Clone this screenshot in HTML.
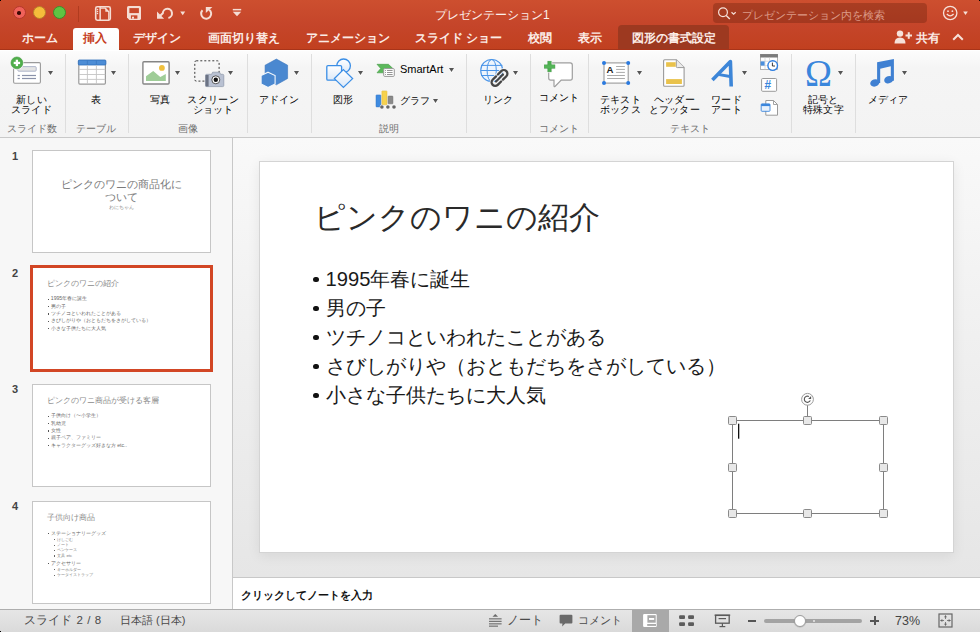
<!DOCTYPE html>
<html><head><meta charset="utf-8">
<style>
*{box-sizing:border-box;margin:0;padding:0}
html,body{width:980px;height:632px;overflow:hidden;background:#f0f0f0;font-family:"Liberation Sans",sans-serif;color:#222}
.a{position:absolute}
#top{left:0;top:0;width:980px;height:50px;background:linear-gradient(#cd4f2f,#c5452a 50%,#c1401f);}
#top .ln{left:0;top:49px;width:980px;height:1px;background:#a8341a}
.tl{width:13px;height:13px;border-radius:50%;top:6.3px}
.tt{font-size:11.7px;color:#fbece6;top:31px;font-weight:700;white-space:nowrap;line-height:14px}
#ribbon{left:0;top:50px;width:980px;height:88px;background:linear-gradient(#fcfcfc,#f5f5f5 20%,#f3f3f3);border-top:1px solid #fff}
#ribbon .bl{left:0;top:86px;width:980px;height:1px;background:#c9c9c9}
.sep{width:1px;background:#dedede;top:4px;height:79px}
.lbl{font-size:10px;line-height:9.1px;color:#000;font-weight:500;white-space:nowrap;text-align:center}
.glbl{font-size:9.5px;line-height:10px;color:#6e6e6e;white-space:nowrap;top:74px}
.dd{width:0;height:0;border-left:2.5px solid transparent;border-right:2.5px solid transparent;border-top:4px solid #555}
#left{left:0;top:138px;width:233px;height:471px;background:#f7f7f7;border-right:1px solid #c8c8c8}
.num{font-size:11px;color:#444;font-weight:bold;left:12px}
.th{left:32px;width:179px;height:103px;background:#fff;border:1px solid #c6c6c6;overflow:hidden}
#main{left:233px;top:138px;width:747px;height:439px;background:linear-gradient(#f9f9f9,#f0f0f0 45%,#e6e6e6)}
#slide{left:259px;top:161px;width:695px;height:392px;background:#fff;border:1px solid #d4d4d4;box-shadow:0 3px 12px rgba(0,0,0,.07)}
#notes{left:233px;top:577px;width:747px;height:32px;background:#fff;border-top:1px solid #c8c8c8}
#status{left:0;top:609px;width:980px;height:23px;background:linear-gradient(#e6e6e6,#dadada);border-top:1px solid #aeaeae}
.st{font-size:11.5px;color:#4a4a4a;white-space:nowrap;top:614px;line-height:13px}
.bul{left:53px;width:5.7px;height:5.7px;border-radius:50%;background:#111}
.tc{white-space:nowrap}
.tb{left:14.7px;width:1.4px;height:1.4px;background:#555}
.tb2{left:21px;width:1.2px;height:1.2px;background:#666}
.l2{font-size:9.5px;letter-spacing:0.3px;line-height:9.8px;transform:translate(0.15px,-0.5px)}
</style></head><body>
<!-- TOP BAR -->
<div id="top" class="a">
  <div class="a ln"></div>
  <div class="a tl" style="left:12.5px;background:#f0625a;border:1px solid #b5372c"><div class="a" style="left:3.9px;top:3.9px;width:3.6px;height:3.6px;border-radius:50%;background:#3a0905"></div></div>
  <div class="a tl" style="left:32.5px;background:#f5bd3b;border:1px solid #b9802a"></div>
  <div class="a tl" style="left:52.5px;background:#5fc443;border:1px solid #3b8f2c"></div>
  <div class="a" style="left:78px;top:6px;width:1px;height:16px;background:#b03b1f"></div>
  <!-- sidebar icon -->
  <svg class="a" style="left:94px;top:5px" width="18" height="17" viewBox="0 0 18 17"><rect x="1.7" y="1.8" width="14.6" height="13.4" rx="1.6" fill="none" stroke="#f5ddd4" stroke-width="1.6"/><rect x="5.4" y="1.8" width="1.5" height="13.4" fill="#f5ddd4"/><circle cx="3.5" cy="4.4" r="0.75" fill="#f5ddd4"/><circle cx="3.5" cy="6.4" r="0.75" fill="#f5ddd4"/><circle cx="3.5" cy="8.4" r="0.75" fill="#f5ddd4"/><path d="M7 3.2 L11.3 3.2 L14.8 6.7 L14.8 15" fill="none" stroke="#f5ddd4" stroke-width="1.3"/><path d="M11.3 3.2 L11.3 6.7 L14.8 6.7 Z" fill="#f5ddd4"/></svg>
  <!-- save icon -->
  <svg class="a" style="left:126px;top:5px" width="16" height="17" viewBox="0 0 16 17"><path d="M1 2.6 Q1 1 2.6 1 L13.4 1 Q15 1 15 2.6 L15 13.4 Q15 15 13.4 15 L3.4 15 L1 12.6 Z" fill="#f5ddd4"/><rect x="3.4" y="3.1" width="9.5" height="5" fill="#c9482a"/><rect x="4.9" y="10.3" width="6.5" height="3.4" fill="#c9482a"/><rect x="6" y="11.7" width="2" height="2" fill="#f5ddd4"/></svg>
  <!-- undo / repeat -->
  <svg class="a" style="left:150px;top:0" width="70" height="28" viewBox="150 0 70 28">
   <path d="M160.2 15.8 L162.8 13.2 A4.6 4.6 0 1 1 168.4 17.9" fill="none" stroke="#f5ddd4" stroke-width="2"/>
   <path d="M157 11.6 L157 18.7 L164.1 18.7 Z" fill="#f5ddd4"/>
   <path d="M180.2 11.4 L185.2 11.4 L182.7 15.2 Z" fill="#f5ddd4"/>
   <path d="M202.5 10.3 A5 5 0 1 0 209.2 9.7" fill="none" stroke="#f5ddd4" stroke-width="2"/>
   <path d="M205.8 6.9 L212.4 6.9 L205.8 13 Z" fill="#f5ddd4"/>
  </svg>
  <!-- customize -->
  <svg class="a" style="left:232px;top:8px" width="10" height="10" viewBox="0 0 10 10"><rect x="0.8" y="0.9" width="8.4" height="1.5" fill="#f5ddd4"/><path d="M0.8 3.8 L9.2 3.8 L5 8.2 Z" fill="#f5ddd4"/></svg>
  <div class="a" style="left:435px;top:8px;font-size:12px;color:#fbefea;line-height:14px;white-space:nowrap;font-weight:500">プレゼンテーション1</div>
  <!-- search -->
  <div class="a" style="left:713px;top:3px;width:214px;height:20px;border-radius:4px;background:rgba(80,20,5,.28)"></div>
  <svg class="a" style="left:716px;top:6px" width="22" height="14" viewBox="0 0 22 14"><circle cx="7" cy="6.2" r="4.4" fill="none" stroke="#f6e1d9" stroke-width="1.2"/><line x1="10.2" y1="9.4" x2="13.8" y2="13" stroke="#f6e1d9" stroke-width="1.4"/><path d="M15.5 6.3 L17.6 8.2 L19.7 6.3" fill="none" stroke="#f6e1d9" stroke-width="1.2"/></svg>
  <div class="a" style="left:742px;top:8px;font-size:10.9px;color:#dc9a88;line-height:14px;white-space:nowrap">プレゼンテーション内を検索</div>
  <!-- smiley -->
  <svg class="a" style="left:942px;top:5px" width="28" height="17" viewBox="0 0 28 17"><circle cx="8.2" cy="8" r="6.7" fill="none" stroke="#f6e1d9" stroke-width="1.3"/><circle cx="6" cy="6.2" r="0.9" fill="#f6e1d9"/><circle cx="10.4" cy="6.2" r="0.9" fill="#f6e1d9"/><path d="M4.8 9 Q8.2 12.8 11.6 9" fill="none" stroke="#f6e1d9" stroke-width="1.2"/><path d="M21.2 6.5 L25.8 6.5 L23.5 10 Z" fill="#f6e1d9"/></svg>
  <!-- tabs -->
  <div class="a tt" style="left:22px">ホーム</div>
  <div class="a" style="left:73px;top:28px;width:46px;height:23px;background:linear-gradient(#ffffff,#fbfbfb);border-radius:3px 3px 0 0"></div>
  <div class="a tt" style="left:83px;color:#c63f1e">挿入</div>
  <div class="a tt" style="left:133px">デザイン</div>
  <div class="a tt" style="left:208px">画面切り替え</div>
  <div class="a tt" style="left:306px">アニメーション</div>
  <div class="a tt" style="left:415px">スライド ショー</div>
  <div class="a tt" style="left:528px">校閲</div>
  <div class="a tt" style="left:578px">表示</div>
  <div class="a" style="left:618px;top:25px;width:111px;height:24px;background:#9d3920;border-radius:4px 4px 0 0"></div>
  <div class="a tt" style="left:632px">図形の書式設定</div>
  <svg class="a" style="left:894px;top:30px" width="19" height="14" viewBox="0 0 19 14"><circle cx="6" cy="3.6" r="3.2" fill="#f6e1d9"/><path d="M0.5 13.5 Q0.5 7.5 6 7.5 Q11.5 7.5 11.5 13.5 Z" fill="#f6e1d9"/><rect x="11.5" y="4.5" width="6.5" height="2" fill="#f6e1d9"/><rect x="13.75" y="2.2" width="2" height="6.6" fill="#f6e1d9"/></svg>
  <div class="a tt" style="left:916px">共有</div>
  <svg class="a" style="left:952px;top:33px" width="12" height="8" viewBox="0 0 12 8"><path d="M1.2 6.8 L6 2 L10.8 6.8" fill="none" stroke="#f6e1d9" stroke-width="2"/></svg>
</div>
<!-- RIBBON -->
<div id="ribbon" class="a">
  <div class="a bl"></div>
</div>
<div class="a sep" style="left:65px;top:54px;height:79px"></div>
<div class="a sep" style="left:128px;top:54px;height:79px"></div>
<div class="a sep" style="left:247px;top:54px;height:79px"></div>
<div class="a sep" style="left:311px;top:54px;height:79px"></div>
<div class="a sep" style="left:466px;top:54px;height:79px"></div>
<div class="a sep" style="left:530px;top:54px;height:79px"></div>
<div class="a sep" style="left:588px;top:54px;height:79px"></div>
<div class="a sep" style="left:791px;top:54px;height:79px"></div>
<div class="a sep" style="left:855px;top:54px;height:79px"></div>
<div class="a lbl l2" style="left:-13.7px;top:95px;width:90px">新しい<br>スライド</div>
<div class="a lbl" style="left:50.7px;top:95px;width:90px">表</div>
<div class="a lbl" style="left:114.6px;top:95px;width:90px">写真</div>
<div class="a lbl l2" style="left:168px;top:95px;width:90px">スクリーン<br>ショット</div>
<div class="a lbl" style="left:234.3px;top:95px;width:90px">アドイン</div>
<div class="a lbl" style="left:297.6px;top:95px;width:90px">図形</div>
<div class="a lbl" style="left:452.6px;top:95px;width:90px">リンク</div>
<div class="a lbl" style="left:514.3px;top:93px;width:90px">コメント</div>
<div class="a lbl l2" style="left:575.1px;top:95px;width:90px">テキスト<br>ボックス</div>
<div class="a lbl l2" style="left:629.2px;top:95px;width:90px">ヘッダー<br>とフッター</div>
<div class="a lbl l2" style="left:681.3px;top:95px;width:90px">ワード<br>アート</div>
<div class="a lbl l2" style="left:778.1px;top:95px;width:90px">記号と<br>特殊文字</div>
<div class="a lbl" style="left:842.5px;top:95px;width:90px">メディア</div>
<div class="a lbl" style="left:400px;top:65px;font-size:11px;text-align:left">SmartArt</div>
<div class="a lbl" style="left:400px;top:96px;text-align:left">グラフ</div>
<div class="a glbl" style="left:-12.75px;top:123.5px;width:90px;text-align:center">スライド数</div>
<div class="a glbl" style="left:51.400000000000006px;top:123.5px;width:90px;text-align:center">テーブル</div>
<div class="a glbl" style="left:142.9px;top:123.5px;width:90px;text-align:center">画像</div>
<div class="a glbl" style="left:344.2px;top:123.5px;width:90px;text-align:center">説明</div>
<div class="a glbl" style="left:514.25px;top:123.5px;width:90px;text-align:center">コメント</div>
<div class="a glbl" style="left:644.5px;top:123.5px;width:90px;text-align:center">テキスト</div>
<svg class="a" style="left:47px;top:70px" width="7" height="7" viewBox="0 0 7 7"><path d="M1 1.5 L6 1.5 L3.5 5.5 Z" fill="#fff" transform="translate(0,0.8)"/><path d="M1 1 L6 1 L3.5 5 Z" fill="#555"/></svg>
<svg class="a" style="left:110px;top:70px" width="7" height="7" viewBox="0 0 7 7"><path d="M1 1.5 L6 1.5 L3.5 5.5 Z" fill="#fff" transform="translate(0,0.8)"/><path d="M1 1 L6 1 L3.5 5 Z" fill="#555"/></svg>
<svg class="a" style="left:174px;top:70px" width="7" height="7" viewBox="0 0 7 7"><path d="M1 1.5 L6 1.5 L3.5 5.5 Z" fill="#fff" transform="translate(0,0.8)"/><path d="M1 1 L6 1 L3.5 5 Z" fill="#555"/></svg>
<svg class="a" style="left:227px;top:70px" width="7" height="7" viewBox="0 0 7 7"><path d="M1 1.5 L6 1.5 L3.5 5.5 Z" fill="#fff" transform="translate(0,0.8)"/><path d="M1 1 L6 1 L3.5 5 Z" fill="#555"/></svg>
<svg class="a" style="left:293px;top:70px" width="7" height="7" viewBox="0 0 7 7"><path d="M1 1.5 L6 1.5 L3.5 5.5 Z" fill="#fff" transform="translate(0,0.8)"/><path d="M1 1 L6 1 L3.5 5 Z" fill="#555"/></svg>
<svg class="a" style="left:357px;top:70px" width="7" height="7" viewBox="0 0 7 7"><path d="M1 1.5 L6 1.5 L3.5 5.5 Z" fill="#fff" transform="translate(0,0.8)"/><path d="M1 1 L6 1 L3.5 5 Z" fill="#555"/></svg>
<svg class="a" style="left:448px;top:67px" width="7" height="7" viewBox="0 0 7 7"><path d="M1 1.5 L6 1.5 L3.5 5.5 Z" fill="#fff" transform="translate(0,0.8)"/><path d="M1 1 L6 1 L3.5 5 Z" fill="#555"/></svg>
<svg class="a" style="left:432px;top:97.5px" width="7" height="7" viewBox="0 0 7 7"><path d="M1 1.5 L6 1.5 L3.5 5.5 Z" fill="#fff" transform="translate(0,0.8)"/><path d="M1 1 L6 1 L3.5 5 Z" fill="#555"/></svg>
<svg class="a" style="left:512px;top:70px" width="7" height="7" viewBox="0 0 7 7"><path d="M1 1.5 L6 1.5 L3.5 5.5 Z" fill="#fff" transform="translate(0,0.8)"/><path d="M1 1 L6 1 L3.5 5 Z" fill="#555"/></svg>
<svg class="a" style="left:636px;top:70px" width="7" height="7" viewBox="0 0 7 7"><path d="M1 1.5 L6 1.5 L3.5 5.5 Z" fill="#fff" transform="translate(0,0.8)"/><path d="M1 1 L6 1 L3.5 5 Z" fill="#555"/></svg>
<svg class="a" style="left:741px;top:70px" width="7" height="7" viewBox="0 0 7 7"><path d="M1 1.5 L6 1.5 L3.5 5.5 Z" fill="#fff" transform="translate(0,0.8)"/><path d="M1 1 L6 1 L3.5 5 Z" fill="#555"/></svg>
<svg class="a" style="left:837px;top:70px" width="7" height="7" viewBox="0 0 7 7"><path d="M1 1.5 L6 1.5 L3.5 5.5 Z" fill="#fff" transform="translate(0,0.8)"/><path d="M1 1 L6 1 L3.5 5 Z" fill="#555"/></svg>
<svg class="a" style="left:901px;top:70px" width="7" height="7" viewBox="0 0 7 7"><path d="M1 1.5 L6 1.5 L3.5 5.5 Z" fill="#fff" transform="translate(0,0.8)"/><path d="M1 1 L6 1 L3.5 5 Z" fill="#555"/></svg>
<!-- ICONS -->
<svg class="a" style="left:0;top:50px" width="980" height="88" viewBox="0 50 980 88">
 <!-- new slide -->
 <rect x="13.6" y="62.6" width="26.8" height="20.6" rx="1.2" fill="#fff" stroke="#9a9a9a" stroke-width="1.1"/>
 <rect x="17.8" y="66.6" width="18.4" height="4.6" rx="1" fill="#e4e4e4" stroke="#a8b0c6" stroke-width="0.9"/>
 <rect x="17.6" y="74.9" width="2.2" height="1.2" fill="#8a92aa"/><rect x="22" y="74.9" width="14" height="1.2" fill="#8a92aa"/>
 <rect x="17.6" y="77.9" width="2.2" height="1.2" fill="#8a92aa"/><rect x="22" y="77.9" width="14" height="1.2" fill="#8a92aa"/>
 <circle cx="16.9" cy="62.9" r="6.8" fill="#f4f4f4"/>
 <circle cx="16.9" cy="62.9" r="5.9" fill="#4fae4a" stroke="#3e9a3a" stroke-width="0.6"/>
 <rect x="13.7" y="61.8" width="6.4" height="2.3" fill="#fff"/><rect x="15.75" y="59.7" width="2.3" height="6.4" fill="#fff"/>
 <!-- table -->
 <rect x="78.8" y="60.5" width="26.6" height="23.6" rx="1" fill="#fff" stroke="#9a9a9a" stroke-width="1.2"/>
 <rect x="78.3" y="60" width="27.6" height="5" rx="1" fill="#4c8dd6" stroke="#2f6fba" stroke-width="0.8"/>
 <g stroke="#c4c4c4" stroke-width="0.9"><line x1="87.4" y1="65" x2="87.4" y2="84"/><line x1="96.4" y1="65" x2="96.4" y2="84"/><line x1="79" y1="69.4" x2="105.3" y2="69.4"/><line x1="79" y1="74.5" x2="105.3" y2="74.5"/><line x1="79" y1="79.4" x2="105.3" y2="79.4"/></g>
 <g stroke="#3a78c2" stroke-width="0.8"><line x1="87.4" y1="60.5" x2="87.4" y2="64.6"/><line x1="96.4" y1="60.5" x2="96.4" y2="64.6"/></g>
 <!-- picture -->
 <rect x="142.9" y="61.7" width="26.2" height="22.3" rx="1" fill="#fff" stroke="#858585" stroke-width="1.4"/>
 <circle cx="161.9" cy="67.9" r="2.9" fill="#f0c03e"/>
 <path d="M146 76.3 L153.2 70.9 L160.3 77 L165.8 74 L165.8 80.9 L146 80.9 Z" fill="#9fcd98"/>
 <!-- screenshot -->
 <rect x="194.8" y="60.8" width="24.3" height="20.3" rx="1.5" fill="none" stroke="#3a3a3a" stroke-width="1" stroke-dasharray="2 2"/>
 <path d="M205.5 75.5 Q205.5 74.3 206.7 74.3 L211.6 74.3 L212.6 72.2 L219.6 72.2 L220.6 74.3 L222.6 74.3 Q223.8 74.3 223.8 75.5 L223.8 85.4 Q223.8 86.6 222.6 86.6 L206.7 86.6 Q205.5 86.6 205.5 85.4 Z" fill="#b9c1d2" stroke="#8d96a8" stroke-width="0.7"/>
 <rect x="205.6" y="75" width="3" height="11.4" fill="#6b7384"/>
 <circle cx="215.8" cy="79.8" r="4" fill="#fff" stroke="#444" stroke-width="0.9"/>
 <circle cx="215.8" cy="79.8" r="2.2" fill="#111"/>
 <!-- addin -->
 <path d="M276.4 59.1 L287.6 65.2 L287.6 78.5 L276.4 84.8 L265.1 78.5 L265.1 65.2 Z" fill="#4a88d0" stroke="#3b76bd" stroke-width="0.6"/>
 <path d="M268.1 72.2 L275.1 75.6 L275.1 84 L268.1 87.6 L261.1 84 L261.1 75.6 Z" fill="#4a88d0" stroke="#f4f8fc" stroke-width="1.1"/>
 <!-- shapes -->
 <defs><linearGradient id="lb" x1="0" y1="0" x2="0" y2="1"><stop offset="0" stop-color="#ffffff"/><stop offset="1" stop-color="#dce9f8"/></linearGradient></defs>
 <circle cx="343.6" cy="65.8" r="6.8" fill="url(#lb)" stroke="#3a8ee6" stroke-width="1.3"/>
 <rect x="326.8" y="65.6" width="14.8" height="14.6" rx="1.2" fill="url(#lb)" stroke="#3a8ee6" stroke-width="1.3"/>
 <path d="M343.4 69.6 L352.6 78.6 L343.4 87.4 L334.4 78.6 Z" fill="url(#lb)" stroke="#3a8ee6" stroke-width="1.3"/>
 <!-- smartart -->
 <path d="M377 64.3 L388.4 64.3 L392.9 68.5 L388.4 72.8 L377 72.8 L380.7 68.5 Z" fill="#5cb85c" stroke="#3f9a3f" stroke-width="0.6"/>
 <rect x="383.7" y="68.6" width="10.6" height="7.8" rx="1" fill="#fff" stroke="#989898" stroke-width="1"/>
 <g fill="#8a8a8a"><rect x="385" y="70" width="0.9" height="0.9"/><rect x="385" y="72" width="0.9" height="0.9"/><rect x="385" y="74" width="0.9" height="0.9"/><rect x="387" y="70" width="5.6" height="0.9"/><rect x="387" y="72" width="5.6" height="0.9"/><rect x="387" y="74" width="5.6" height="0.9"/></g>
 <!-- chart -->
 <rect x="376" y="94.9" width="4.9" height="12" rx="0.6" fill="#3f8be0" stroke="#2e74c6" stroke-width="0.5"/>
 <rect x="381.9" y="90.9" width="5.1" height="13.9" rx="0.6" fill="#f6d24e" stroke="#e2b93a" stroke-width="0.5"/>
 <rect x="388.1" y="96.1" width="4.8" height="7.7" rx="0.6" fill="#8a8a8a" stroke="#666" stroke-width="0.5"/>
 <circle cx="381.9" cy="107" r="2.2" fill="#f4f4f4"/><circle cx="387.9" cy="107" r="2.2" fill="#f4f4f4"/><circle cx="394" cy="107" r="2.2" fill="#f4f4f4"/>
 <circle cx="381.9" cy="107" r="1.8" fill="#666"/><circle cx="387.9" cy="107" r="1.8" fill="#666"/><circle cx="394" cy="107" r="1.8" fill="#666"/>
 <!-- link -->
 <circle cx="491.7" cy="70.5" r="11" fill="#eef5fd" stroke="#4b95e8" stroke-width="1.1"/>
 <ellipse cx="491.7" cy="70.5" rx="4.6" ry="11" fill="none" stroke="#4b95e8" stroke-width="1"/>
 <g stroke="#4b95e8" stroke-width="1"><line x1="481" y1="65.4" x2="502.4" y2="65.4"/><line x1="480.7" y1="70.5" x2="502.7" y2="70.5"/><line x1="481" y1="75.5" x2="502.4" y2="75.5"/></g>
 <g transform="rotate(-45 499.5 78)" fill="none" stroke-linecap="round">
  <path d="M498.2 74.4 L493.4 74.4 A3.6 3.6 0 0 0 493.4 81.6 L498.2 81.6" stroke="#f4f4f4" stroke-width="4"/>
  <path d="M500.8 74.4 L505.6 74.4 A3.6 3.6 0 0 1 505.6 81.6 L500.8 81.6" stroke="#f4f4f4" stroke-width="4"/>
  <path d="M498.2 74.4 L493.4 74.4 A3.6 3.6 0 0 0 493.4 81.6 L498.2 81.6" stroke="#464646" stroke-width="2.3"/>
  <path d="M500.8 74.4 L505.6 74.4 A3.6 3.6 0 0 1 505.6 81.6 L500.8 81.6" stroke="#464646" stroke-width="2.3"/>
  <line x1="494.6" y1="78" x2="504.4" y2="78" stroke="#464646" stroke-width="2.2"/>
 </g>
 <!-- comment -->
 <path d="M550.8 62.8 L570.2 62.8 Q572.3 62.8 572.3 64.9 L572.3 78 Q572.3 80.1 570.2 80.1 L561.2 80.1 L555.2 86.2 Q554 87.2 554 85.8 L554 80.1 L550.8 80.1 Q548.7 80.1 548.7 78 L548.7 64.9 Q548.7 62.8 550.8 62.8 Z" fill="#fff" stroke="#9e9e9e" stroke-width="1.2"/>
 <rect x="543.6" y="64.2" width="12" height="5.2" fill="#f4f4f4"/><rect x="547" y="60.6" width="5.2" height="12" fill="#f4f4f4"/>
 <rect x="544.3" y="64.9" width="10.6" height="3.3" fill="#4caf50" stroke="#3c9a40" stroke-width="0.5"/><rect x="547.85" y="61.2" width="3.3" height="10.6" fill="#4caf50" stroke="#3c9a40" stroke-width="0.5"/>
 <rect x="544.5" y="65.1" width="10.2" height="2.9" fill="#54b458"/>
 <!-- textbox -->
 <rect x="604" y="62.9" width="24.2" height="20.2" fill="#fff" stroke="#9a9a9a" stroke-width="1.1"/>
 <text x="606.6" y="72.9" font-family="Liberation Sans" font-size="9.6" font-weight="bold" fill="#222">A</text>
 <g fill="#ababab"><rect x="616.1" y="66" width="8.8" height="1"/><rect x="616.1" y="68.9" width="8.8" height="1"/><rect x="616.1" y="71.9" width="8.8" height="1"/><rect x="607.1" y="75" width="17.8" height="1"/><rect x="607.1" y="78" width="17.8" height="1"/></g>
 <g fill="#2a7ae0"><circle cx="604" cy="62.9" r="2"/><circle cx="628.2" cy="62.9" r="2"/><circle cx="604" cy="83.1" r="2"/><circle cx="628.2" cy="83.1" r="2"/></g>
 <!-- header footer -->
 <path d="M664.6 59.7 L676.3 59.7 L684.1 67.6 L684.1 85.2 Q684.1 86.2 683.1 86.2 L664.6 86.2 Q663.6 86.2 663.6 85.2 L663.6 60.7 Q663.6 59.7 664.6 59.7 Z" fill="#fff" stroke="#9a9a9a" stroke-width="1.1"/>
 <path d="M676.3 59.7 L676.3 66.6 Q676.3 67.6 677.3 67.6 L684.1 67.6" fill="#ececec" stroke="#9a9a9a" stroke-width="1"/>
 <rect x="666.1" y="62.2" width="9.6" height="4.6" fill="#e9c24c"/>
 <rect x="666.1" y="79.1" width="15.8" height="4.9" fill="#e9c24c"/>
 <!-- wordart -->
 <path d="M712.4 80 L730.4 61.6 L731.2 86.5" fill="none" stroke="#3d86d8" stroke-width="3.6" stroke-linejoin="round"/>
 <line x1="719.2" y1="74.6" x2="730.2" y2="76.5" stroke="#3d86d8" stroke-width="2.8"/>
 <!-- date time -->
 <rect x="760.5" y="54.5" width="17" height="15" fill="#fff" stroke="#a0a0a0" stroke-width="0.8"/>
 <rect x="760.2" y="54.1" width="17.7" height="3.4" fill="#7b7b7b"/>
 <g stroke="#cfcfcf" stroke-width="0.7"><line x1="765" y1="57.5" x2="765" y2="69.5"/><line x1="769.5" y1="57.5" x2="769.5" y2="69.5"/><line x1="760.5" y1="61.2" x2="777.5" y2="61.2"/><line x1="760.5" y1="65.6" x2="777.5" y2="65.6"/></g>
 <rect x="760.6" y="61.4" width="4" height="4.2" fill="#4b8fdc"/>
 <circle cx="772.7" cy="65.6" r="4.8" fill="#fff" stroke="#2e7ee0" stroke-width="1.4"/>
 <path d="M772.4 62.6 L772.4 66 L775 66" fill="none" stroke="#222" stroke-width="0.9"/>
 <!-- slide number -->
 <rect x="761.6" y="78.5" width="15" height="12.8" rx="1" fill="#fff" stroke="#9a9a9a" stroke-width="1"/>
 <text x="764.2" y="89.4" font-family="Liberation Sans" font-size="12" font-style="italic" font-weight="bold" fill="#3b86dc">#</text>
 <!-- object -->
 <path d="M765.8 100.5 L773.5 100.5 L777.5 104.5 L777.5 115.2 L765.8 115.2 Z" fill="#fff" stroke="#9a9a9a" stroke-width="1"/>
 <path d="M773.5 100.5 L773.5 104.5 L777.5 104.5" fill="none" stroke="#9a9a9a" stroke-width="0.9"/>
 <rect x="761.2" y="103.9" width="8.8" height="7.4" rx="0.8" fill="#e8f1fb" stroke="#3b86dc" stroke-width="0.9"/>
 <rect x="761.2" y="103.9" width="8.8" height="2.2" fill="#3b86dc"/>
 <!-- media -->
 <path d="M877.1 62.3 L893.9 59.1 L893.9 80.8 L890.8 80.8 L890.8 66.2 L880.2 68.7 L880.2 83 L877.1 83 Z" fill="#3f80d2"/>
 <ellipse cx="874.8" cy="82.9" rx="4.7" ry="3.6" transform="rotate(-18 874.8 82.9)" fill="#3f80d2"/>
 <ellipse cx="888.8" cy="79.7" rx="4.7" ry="3.6" transform="rotate(-18 888.8 79.7)" fill="#3f80d2"/>
</svg>
<div class="a" style="left:805px;top:53.5px;font-family:'Liberation Serif',serif;font-size:37px;line-height:40px;color:#3a86dc;transform:scaleX(0.98);transform-origin:left top">Ω</div>
<!-- LEFT PANE -->
<div id="left" class="a"></div>
<div class="a num" style="top:149.5px">1</div>
<div class="a num" style="top:266.5px">2</div>
<div class="a num" style="top:383.2px">3</div>
<div class="a num" style="top:500.3px">4</div>
<div class="a th" style="top:150px">
 <div class="a tc" style="left:0;top:26.5px;width:177px;text-align:center;font-size:10.7px;line-height:13px;color:#7a7a7a">ピンクのワニの商品化に<br>ついて</div>
 <div class="a tc" style="left:0;top:54px;width:177px;text-align:center;font-size:4.6px;line-height:6px;color:#888">わにちゃん</div>
</div>
<div class="a" style="left:30px;top:265px;width:183px;height:107px;border:3px solid #d24625;background:#fff;overflow:hidden">
 <div class="a tc" style="left:13.6px;top:10.3px;font-size:8.2px;line-height:11px;color:#8a8a8a">ピンクのワニの紹介</div>
 <div class="a tc" style="left:17.8px;top:27.2px;font-size:5.1px;line-height:7.35px;color:#666">1995年春に誕生<br>男の子<br>ツチノコといわれたことがある<br>さびしがりや（おともだちをさがしている）<br>小さな子供たちに大人気</div>
 <div class="a tb" style="top:30.6px"></div><div class="a tb" style="top:37.95px"></div><div class="a tb" style="top:45.3px"></div><div class="a tb" style="top:52.65px"></div><div class="a tb" style="top:60px"></div>
</div>
<div class="a th" style="top:384px">
 <div class="a tc" style="left:13.6px;top:10.3px;font-size:8.2px;line-height:11px;color:#8a8a8a">ピンクのワニ商品が受ける客層</div>
 <div class="a tc" style="left:17.8px;top:27.2px;font-size:5.1px;line-height:7.35px;color:#666">子供向け（〜小学生）<br>乳幼児<br>女性<br>親子ペア、ファミリー<br>キャラクターグッズ好きな方 etc..</div>
 <div class="a tb" style="top:30.6px"></div><div class="a tb" style="top:37.95px"></div><div class="a tb" style="top:45.3px"></div><div class="a tb" style="top:52.65px"></div><div class="a tb" style="top:60px"></div>
</div>
<div class="a th" style="top:501px">
 <div class="a tc" style="left:13.6px;top:10.3px;font-size:8.2px;line-height:11px;color:#8a8a8a">子供向け商品</div>
 <div class="a tc" style="left:17.8px;top:27.5px;font-size:5.1px;line-height:6px;color:#666">ステーショナリーグッズ</div>
 <div class="a tc" style="left:24.2px;top:34.5px;font-size:4.3px;line-height:5.4px;color:#777">けしごむ<br>ノート<br>ペンケース<br>文具 etc</div>
 <div class="a tc" style="left:17.8px;top:57.5px;font-size:5.1px;line-height:6px;color:#666">アクセサリー</div>
 <div class="a tc" style="left:24.2px;top:64.5px;font-size:4.3px;line-height:5.4px;color:#777">キーホルダー<br>ケータイストラップ</div>
 <div class="a tb" style="top:30.6px"></div><div class="a tb" style="top:60.6px"></div>
 <div class="a tb2" style="top:37.2px"></div><div class="a tb2" style="top:42.6px"></div><div class="a tb2" style="top:48px"></div><div class="a tb2" style="top:53.4px"></div><div class="a tb2" style="top:67.2px"></div><div class="a tb2" style="top:72.6px"></div>
</div>
<!-- MAIN -->
<div id="main" class="a"></div>
<div id="slide" class="a">
 <div class="a" style="left:54px;top:36px;font-size:31.2px;line-height:40px;font-weight:300;color:#2a2a2a;white-space:nowrap">ピンクのワニの紹介</div>
 <div class="a" style="left:65.5px;top:102.5px;font-size:20.2px;line-height:29px;font-weight:350;color:#1a1a1a;white-space:nowrap">1995年春に誕生<br>男の子<br>ツチノコといわれたことがある<br>さびしがりや（おともだちをさがしている）<br>小さな子供たちに大人気</div>
 <div class="a bul" style="top:114.8px"></div><div class="a bul" style="top:143.8px"></div><div class="a bul" style="top:172.8px"></div><div class="a bul" style="top:201.8px"></div><div class="a bul" style="top:230.8px"></div>
</div>
<!-- selection -->
<svg class="a" style="left:720px;top:385px" width="180" height="140" viewBox="720 385 180 140">
 <rect x="732.5" y="420.5" width="151" height="93" fill="none" stroke="#7e7e7e" stroke-width="1"/>
 <line x1="807.5" y1="405" x2="807.5" y2="417" stroke="#7e7e7e" stroke-width="1"/>
 <circle cx="807.5" cy="399.3" r="5.9" fill="#fff" stroke="#9a9a9a" stroke-width="1"/>
 <path d="M808.9 396.5 A3.1 3.1 0 1 0 810.3 400.4" fill="none" stroke="#555" stroke-width="1.1"/>
 <path d="M811.1 395.9 L811.1 398.9 L808.1 398.9 Z" fill="#555"/>
 <g fill="#e8e8e8" stroke="#8a8a8a" stroke-width="1">
  <rect x="728.5" y="416.5" width="8" height="8" rx="1"/><rect x="803.5" y="416.5" width="8" height="8" rx="1"/><rect x="879.5" y="416.5" width="8" height="8" rx="1"/>
  <rect x="728.5" y="463.5" width="8" height="8" rx="1"/><rect x="879.5" y="463.5" width="8" height="8" rx="1"/>
  <rect x="728.5" y="509.5" width="8" height="8" rx="1"/><rect x="803.5" y="509.5" width="8" height="8" rx="1"/><rect x="879.5" y="509.5" width="8" height="8" rx="1"/>
 </g>
 <rect x="738" y="423.7" width="1.3" height="15" fill="#111"/>
</svg>
<div id="notes" class="a"></div>
<div class="a" style="left:241px;top:588px;font-size:10.8px;line-height:14px;font-weight:700;color:#111;white-space:nowrap">クリックしてノートを入力</div>
<div id="status" class="a"></div>
<div class="a st" style="left:24px;word-spacing:1.2px">スライド 2 / 8</div>
<div class="a st" style="left:120px;font-size:11px">日本語 (日本)</div>
<svg class="a" style="left:488px;top:613px" width="15" height="14" viewBox="0 0 15 14"><path d="M4.5 3.8 L7.3 1 L10.1 3.8 Z" fill="#6a6a6a"/><g fill="#6a6a6a"><rect x="1" y="5.3" width="12.6" height="1.1"/><rect x="1" y="7.8" width="12.6" height="1.1"/><rect x="1" y="10.3" width="12.6" height="1.1"/><rect x="1" y="12.6" width="9" height="1.1"/></g></svg>
<div class="a st" style="left:507px">ノート</div>
<svg class="a" style="left:559px;top:614px" width="15" height="14" viewBox="0 0 15 14"><path d="M1.6 0.8 L12.4 0.8 Q13.4 0.8 13.4 1.8 L13.4 8.6 Q13.4 9.6 12.4 9.6 L6.2 9.6 L3.2 12.4 L3.4 9.6 L1.6 9.6 Q0.6 9.6 0.6 8.6 L0.6 1.8 Q0.6 0.8 1.6 0.8 Z" fill="#6a6a6a"/></svg>
<div class="a st" style="left:578px;font-size:11px">コメント</div>
<div class="a" style="left:632px;top:610px;width:37px;height:22px;background:#a9a9a9"></div>
<svg class="a" style="left:628px;top:606px" width="72" height="26" viewBox="628 606 72 26">
 <rect x="643.1" y="614.1" width="13.6" height="12.9" rx="1" fill="#fff"/>
 <rect x="647.4" y="615.2" width="8.3" height="7.5" fill="#a9a9a9"/>
 <rect x="649" y="618" width="5.2" height="1.9" fill="#fff"/>
 <rect x="647.2" y="624" width="8.8" height="1.9" fill="#a9a9a9"/>
 <g fill="#5c5c5c"><rect x="679.1" y="615.2" width="5.9" height="3.8" rx="1"/><rect x="688.1" y="615.2" width="5.9" height="3.8" rx="1"/><rect x="679.1" y="622.2" width="5.9" height="3.8" rx="1"/><rect x="688.1" y="622.2" width="5.9" height="3.8" rx="1"/></g>
</svg>
<svg class="a" style="left:714px;top:614px" width="18" height="14" viewBox="0 0 18 14"><rect x="1.6" y="1.4" width="13.6" height="7.8" fill="none" stroke="#5a5a5a" stroke-width="1.3"/><rect x="0.6" y="0.5" width="15.6" height="1.4" fill="#5a5a5a"/><rect x="4.6" y="4" width="7.4" height="1.2" fill="#5a5a5a"/><line x1="8.4" y1="9.2" x2="8.4" y2="12.2" stroke="#5a5a5a" stroke-width="1.2"/><line x1="5.5" y1="12.6" x2="11.3" y2="12.6" stroke="#5a5a5a" stroke-width="1.2"/></svg>
<div class="a" style="left:748px;top:619.8px;width:8px;height:2px;background:#555"></div>
<div class="a" style="left:764px;top:618.8px;width:97.5px;height:4px;border-radius:2px;background:#a3a3a3"></div>
<div class="a" style="left:812.5px;top:619.8px;width:2px;height:2px;border-radius:1px;background:#e8e8e8"></div>
<div class="a" style="left:794px;top:614.8px;width:12px;height:12px;border-radius:50%;background:#fff;border:1px solid #9d9d9d;box-shadow:0 0.5px 1px rgba(0,0,0,.2)"></div>
<div class="a" style="left:870px;top:619.8px;width:9px;height:2px;background:#555"></div>
<div class="a" style="left:873.5px;top:616.3px;width:2px;height:9px;background:#555"></div>
<div class="a st" style="left:895px;top:615px;font-size:12.5px;color:#444">73%</div>
<svg class="a" style="left:938px;top:613px" width="15" height="15" viewBox="0 0 15 15"><rect x="1" y="1" width="13" height="13" fill="none" stroke="#666" stroke-width="1.2"/><g stroke="#666" stroke-width="0.8"><line x1="7.5" y1="2.5" x2="7.5" y2="12.5"/><line x1="2.5" y1="7.5" x2="12.5" y2="7.5"/></g><g fill="#666"><path d="M7.5 2.3 L6 4.3 L9 4.3 Z"/><path d="M7.5 12.7 L6 10.7 L9 10.7 Z"/><path d="M2.3 7.5 L4.3 6 L4.3 9 Z"/><path d="M12.7 7.5 L10.7 6 L10.7 9 Z"/></g><rect x="6" y="6" width="3" height="3" fill="#e0e0e0"/></svg>
<div class="a" style="left:979px;top:0;width:1px;height:1px;background:#000"></div><div class="a" style="left:0;top:0;width:1px;height:1px;background:#000"></div><div class="a" style="left:0;top:631px;width:1px;height:1px;background:#000"></div>
</body></html>
